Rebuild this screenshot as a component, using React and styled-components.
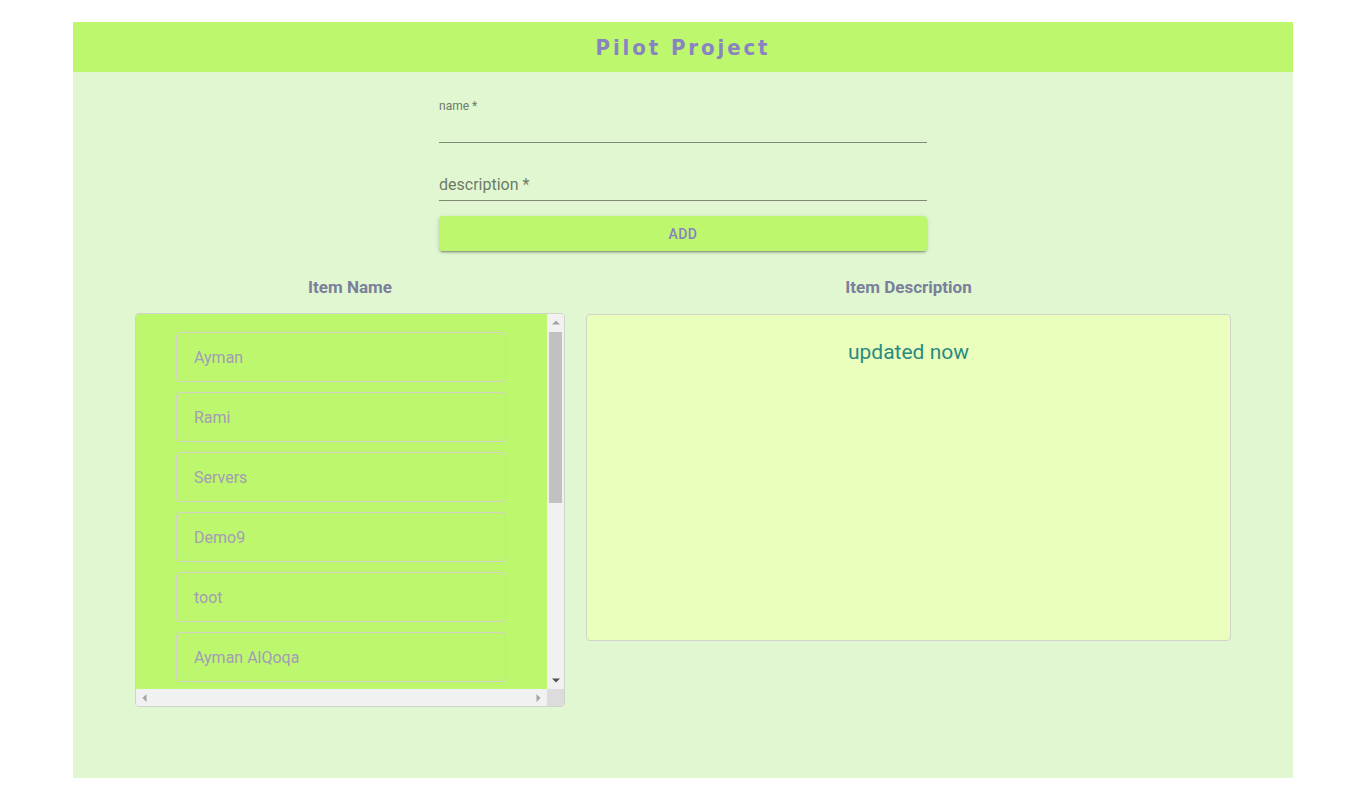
import React from "react";
import styled, { createGlobalStyle } from "styled-components";

const GlobalStyle = createGlobalStyle`
  html, body {
    margin: 0;
    padding: 0;
    background: #ffffff;
    font-family: Roboto, "Liberation Sans", sans-serif;
  }
`;

const Page = styled.div`
  width: 1220px;
  margin: 22px auto 0 auto;
  background: #e0f7d1;
  padding-bottom: 71px;
`;

const Header = styled.header`
  height: 50px;
  background: #bdf76e;
  display: flex;
  align-items: center;
  justify-content: center;
`;

const Title = styled.h1`
  margin: 0;
  font-family: "DejaVu Sans Condensed", "Liberation Sans", sans-serif;
  font-weight: 700;
  font-size: 22px;
  letter-spacing: 2.9px;
  color: #8a83c2;
`;

const Form = styled.form`
  width: 488px;
  margin: 22px auto 0 auto;
  display: flex;
  flex-direction: column;
`;

const Field = styled.div`
  position: relative;
  height: 48px;
  border-bottom: 1px solid #7f8a72;
  margin-top: ${(props) => (props.$first ? "0" : "9px")};
`;

const Label = styled.label`
  position: absolute;
  left: 0;
  color: #6f7a66;
  ${(props) =>
    props.$shrink
      ? `top: 5px; font-size: 12px;`
      : `bottom: 6px; font-size: 16px;`}
`;

const AddButton = styled.button`
  margin-top: 15px;
  height: 35px;
  border: none;
  border-radius: 4px;
  background: #bdf76e;
  color: #8a80c0;
  font-family: Roboto, sans-serif;
  font-weight: 500;
  font-size: 14px;
  letter-spacing: 0.4px;
  box-shadow: 0 3px 1px -2px rgba(0, 0, 0, 0.2), 0 2px 2px 0 rgba(0, 0, 0, 0.14),
    0 1px 5px 0 rgba(0, 0, 0, 0.12);
`;

const Columns = styled.div`
  display: grid;
  grid-template-columns: 430px 645px;
  column-gap: 21px;
  padding: 0 62px;
  margin-top: 26px;
`;

const Column = styled.section`
  display: flex;
  flex-direction: column;
`;

const ColumnTitle = styled.h3`
  margin: 0 0 16px 0;
  height: 20px;
  line-height: 20px;
  text-align: center;
  font-size: 17px;
  font-weight: 700;
  color: #7b7f9b;
`;

/* list box with classic scrollbars drawn as parts of a grid */
const ListFrame = styled.div`
  height: 394px;
  box-sizing: border-box;
  border: 1px solid #d2d2cc;
  border-radius: 4px;
  overflow: hidden;
  display: grid;
  grid-template-columns: 1fr 17px;
  grid-template-rows: 1fr 17px;
`;

const ListContent = styled.div`
  overflow: hidden;
  background: #bdf76e;
  padding: 8px 0 0 40px;
`;

const VScroll = styled.div`
  background: #f1f1f1;
  display: flex;
  flex-direction: column;
`;

const HScroll = styled.div`
  background: #f1f1f1;
  display: flex;
  align-items: center;
  justify-content: space-between;
`;

const Corner = styled.div`
  background: #dcdcdc;
`;

const ArrowBtn = styled.div`
  width: 17px;
  height: 17px;
  flex: none;
  display: flex;
  align-items: center;
  justify-content: center;
`;

const VTrack = styled.div`
  flex: 1;
  padding: 0 2px;
`;

const Thumb = styled.div`
  height: ${(props) => props.$size}px;
  margin-top: ${(props) => props.$offset}px;
  background: #c1c1c1;
`;

const ListItem = styled.div`
  width: 330px;
  height: 50px;
  box-sizing: border-box;
  margin: 10px 0;
  border: 1px solid #d3d3c8;
  border-radius: 4px;
  display: flex;
  align-items: center;
  padding-left: 17px;
  font-size: 16px;
  color: #a39cb5;
`;

const DescBox = styled.div`
  height: 327px;
  margin-top: 1px;
  box-sizing: border-box;
  background: #ebffbd;
  border: 1px solid #d2d2cc;
  border-radius: 4px;
  padding-top: 25px;
  text-align: center;
  font-size: 21px;
  color: #2a8a80;
`;

const Arrow = ({ dir, color }) => {
  const points = {
    up: "4,1.5 8,5.5 0,5.5",
    down: "0,1.5 8,1.5 4,5.5",
    left: "5.5,0 5.5,8 1.5,4",
    right: "1.5,0 1.5,8 5.5,4",
  }[dir];
  return (
    <svg width="8" height="8" viewBox="0 0 8 8">
      <polygon points={points} fill={color} />
    </svg>
  );
};

const items = ["Ayman", "Rami", "Servers", "Demo9", "toot", "Ayman AlQoqa"];

const App = () => {
  return (
    <>
      <GlobalStyle />
      <Page>
        <Header>
          <Title>Pilot Project</Title>
        </Header>

        <Form>
          <Field $first>
            <Label $shrink>name *</Label>
          </Field>
          <Field>
            <Label>description *</Label>
          </Field>
          <AddButton type="button">ADD</AddButton>
        </Form>

        <Columns>
          <Column>
            <ColumnTitle>Item Name</ColumnTitle>
            <ListFrame>
              <ListContent>
                {items.map((item, i) => (
                  <ListItem key={i}>{item}</ListItem>
                ))}
              </ListContent>
              <VScroll>
                <ArrowBtn>
                  <Arrow dir="up" color="#a3a3a3" />
                </ArrowBtn>
                <VTrack>
                  <Thumb $offset={1} $size={171} />
                </VTrack>
                <ArrowBtn>
                  <Arrow dir="down" color="#505050" />
                </ArrowBtn>
              </VScroll>
              <HScroll>
                <ArrowBtn>
                  <Arrow dir="left" color="#a3a3a3" />
                </ArrowBtn>
                <ArrowBtn>
                  <Arrow dir="right" color="#a3a3a3" />
                </ArrowBtn>
              </HScroll>
              <Corner />
            </ListFrame>
          </Column>
          <Column>
            <ColumnTitle>Item Description</ColumnTitle>
            <DescBox>updated now</DescBox>
          </Column>
        </Columns>
      </Page>
    </>
  );
};

export default App;
